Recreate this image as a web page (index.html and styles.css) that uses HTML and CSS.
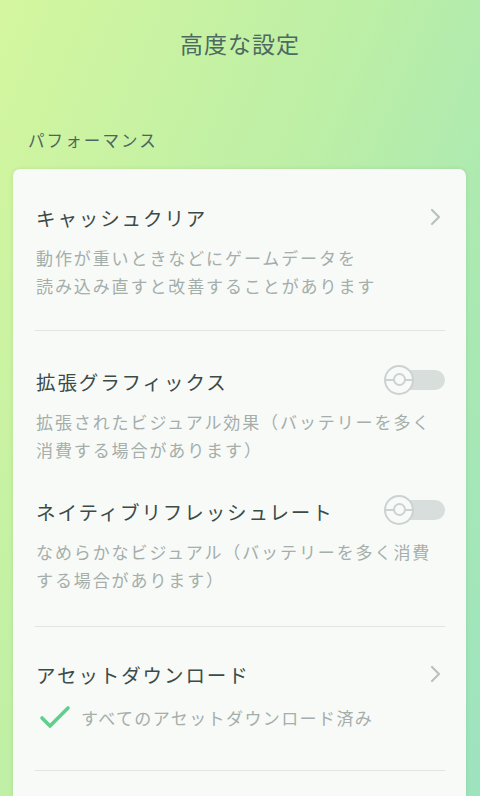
FILE: index.html
```html
<!DOCTYPE html>
<html lang="ja">
<head>
  <meta charset="UTF-8" />
  <meta name="viewport" content="width=device-width, initial-scale=1.0"/>
  <title>高度な設定</title>
<link rel="stylesheet" href="styles.css">
</head>
<body>
  <div class="screen">
    <h1 class="title">高度な設定</h1>
    <p class="section-label">パフォーマンス</p>

    <div class="card">
      <div class="group group-cache">
        <div class="row">
          <span class="row-title">キャッシュクリア</span>
          <svg class="chevron" width="12" height="18" viewBox="0 0 12 18"><path d="M2 2 L9 9 L2 16" fill="none" stroke="#b9c1be" stroke-width="2.2" stroke-linecap="round" stroke-linejoin="round"/></svg>
        </div>
        <p class="desc">動作が重いときなどにゲームデータを<br>読み込み直すと改善することがあります</p>
      </div>

      <div class="group group-graphics">
        <div class="item">
          <div class="row">
            <span class="row-title">拡張グラフィックス</span>
            <span class="toggle"><span class="knob"></span></span>
          </div>
          <p class="desc">拡張されたビジュアル効果（バッテリーを多く<br>消費する場合があります）</p>
        </div>
        <div class="item">
          <div class="row">
            <span class="row-title">ネイティブリフレッシュレート</span>
            <span class="toggle"><span class="knob"></span></span>
          </div>
          <p class="desc">なめらかなビジュアル（バッテリーを多く消費<br>する場合があります）</p>
        </div>
      </div>

      <div class="group group-assets">
        <div class="row">
          <span class="row-title">アセットダウンロード</span>
          <svg class="chevron" width="12" height="18" viewBox="0 0 12 18"><path d="M2 2 L9 9 L2 16" fill="none" stroke="#b9c1be" stroke-width="2.2" stroke-linecap="round" stroke-linejoin="round"/></svg>
        </div>
        <div class="status">
          <svg class="check" width="32" height="26" viewBox="0 0 32 26"><path d="M3 14 L11 22 L29 4" fill="none" stroke="#5fcf8c" stroke-width="3.6" stroke-linecap="round" stroke-linejoin="round"/></svg>
          <span>すべてのアセットダウンロード済み</span>
        </div>
      </div>
    </div>
  </div>
</body>
</html>
```

FILE: styles.css
```css
html, body {
  margin: 0;
  padding: 0;
  height: 100%;
}
body {
  font-family: "Noto Sans CJK JP", "Noto Sans", sans-serif;
  background: linear-gradient(112deg, #d4f69f 0%, #bdefa6 45%, #a8e8b4 78%, #9de3bf 100%);
  overflow: hidden;
}
.screen {
  height: 796px;
  display: flex;
  flex-direction: column;
}
.title {
  margin: 27px 0 0;
  text-align: center;
  font-size: 23px;
  font-weight: 400;
  letter-spacing: 1px;
  line-height: 32px;
  color: #4d6962;
}
.section-label {
  margin: 69px 0 0 28px;
  font-size: 16.5px;
  letter-spacing: 2.1px;
  line-height: 24px;
  color: #4b6660;
}
.card {
  margin: 17px 14px 0 13px;
  flex: 1;
  background: #f8faf7;
  border-radius: 7px 7px 0 0;
  padding: 0 21px 0 22px;
  box-shadow: 0 0 4px rgba(60, 110, 70, 0.15);
}
.group {
  border-bottom: 1.5px solid #e1e6e3;
}
.group-cache {
  padding: 34px 0 30px;
}
.group-graphics {
  padding: 36px 0 32px;
}
.group-graphics .item + .item {
  margin-top: 33px;
}
.group-assets {
  padding: 33px 0 39px;
}
.row {
  display: flex;
  align-items: center;
  justify-content: space-between;
  height: 28px;
}
.row-title {
  margin-left: 1px;
  font-size: 19.5px;
  letter-spacing: 1.9px;
  color: #3b4b48;
}
.chevron {
  margin-right: 3px;
}
.desc {
  margin: 13px 0 0 1px;
  font-size: 17px;
  line-height: 28px;
  letter-spacing: 1.9px;
  color: #a4aeab;
}
.toggle {
  position: relative;
  width: 61px;
  height: 30px;
  margin-top: -2px;
}
.toggle::before {
  content: "";
  position: absolute;
  left: 12px;
  right: 0;
  top: 5px;
  height: 20px;
  border-radius: 10px;
  background: #d8dedc;
}
.knob {
  position: absolute;
  left: 0;
  top: 0;
  width: 26px;
  height: 26px;
  border: 2px solid #cbd2cf;
  border-radius: 50%;
  background: linear-gradient(#f8faf9 0 12px, #cbd2cf 12px 14px, #f8faf9 14px);
}
.knob::after {
  content: "";
  position: absolute;
  left: 7px;
  top: 6px;
  width: 9px;
  height: 9px;
  border: 2px solid #cbd2cf;
  border-radius: 50%;
  background: #f8faf9;
}
.status {
  display: flex;
  align-items: center;
  margin-top: 15px;
  height: 28px;
  font-size: 17px;
  letter-spacing: 1.4px;
  color: #a4aeab;
}
.check {
  margin: 0 10px 0 4px;
}
```
